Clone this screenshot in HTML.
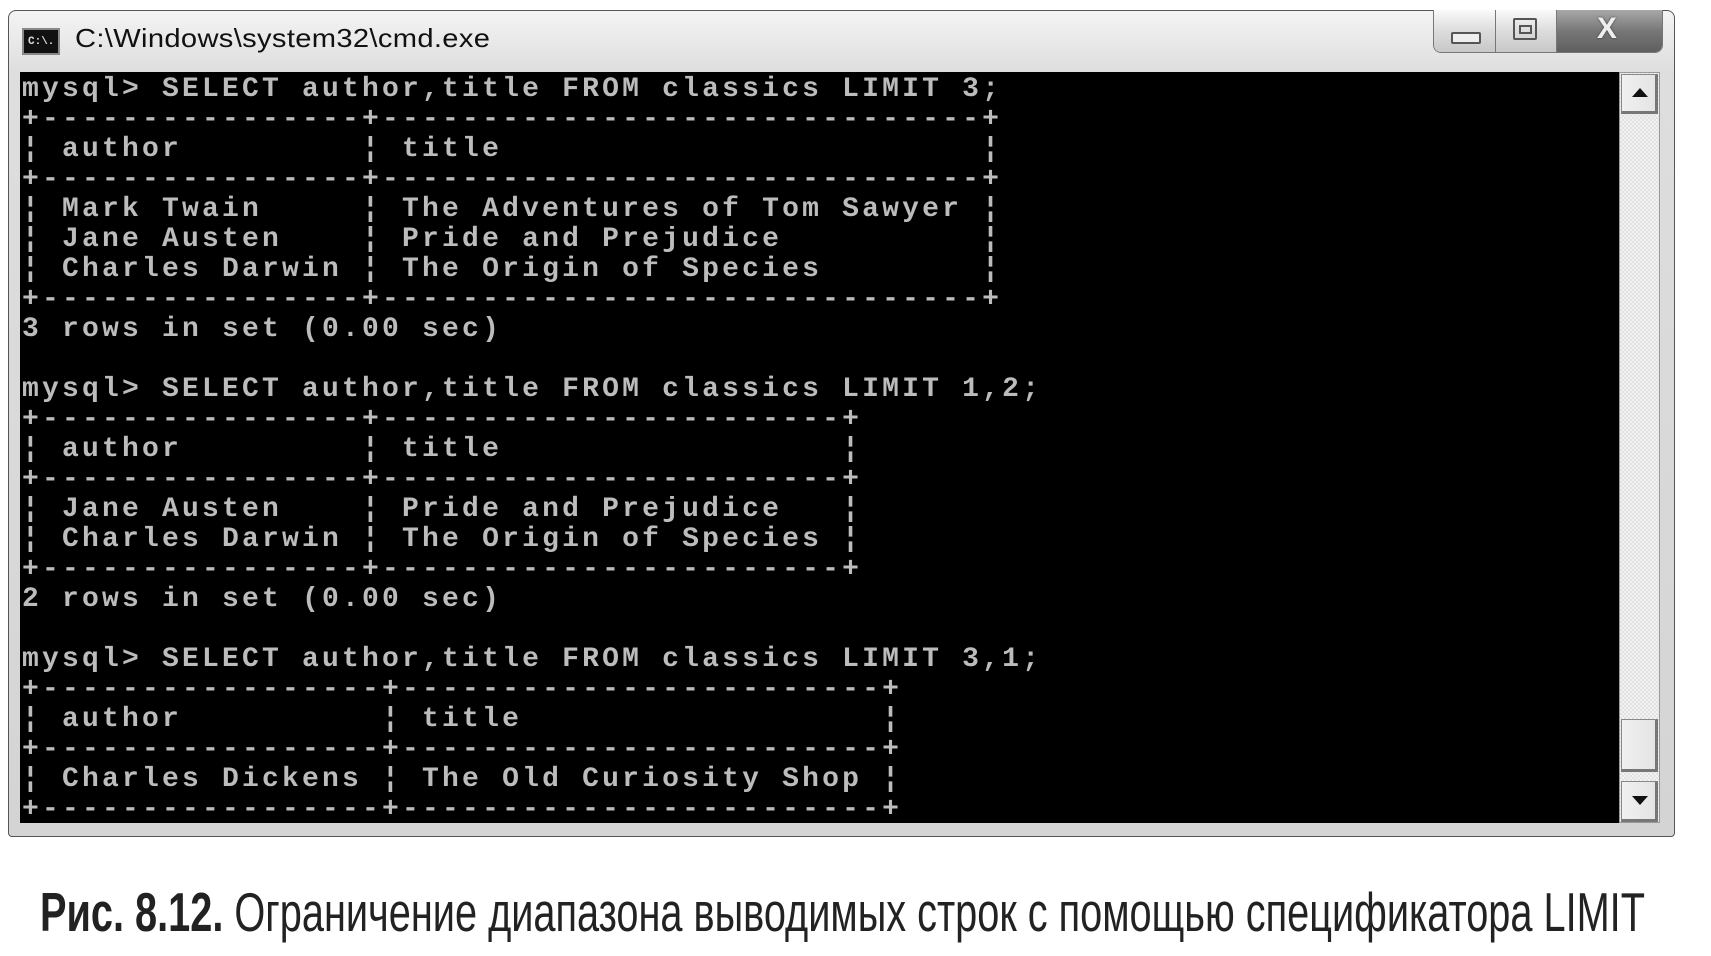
<!DOCTYPE html>
<html><head><meta charset="utf-8"><style>
html,body{margin:0;padding:0;background:#fff;width:1711px;height:956px;overflow:hidden;position:relative}
.win{position:absolute;left:8px;top:10px;width:1667px;height:827px;border:1px solid #555;border-radius:8px 8px 4px 4px;background:linear-gradient(#f4f4f4,#dedede 60px,#d4d4d4);box-sizing:border-box}
.icon{position:absolute;left:22px;top:28px;width:38px;height:27px;background:#111;border:2px solid #888;box-sizing:border-box}
.icon span{position:absolute;left:4px;top:6px;font:bold 11px "Liberation Mono",monospace;color:#ddd}
.title{position:absolute;left:75px;top:23px;font:26px "Liberation Sans",sans-serif;color:#111;letter-spacing:0.3px;transform:scaleX(1.12);transform-origin:left}
.btns{position:absolute;left:1433px;top:10px;width:230px;height:43px;border:1px solid #777;border-top:none;border-radius:0 0 8px 8px;overflow:hidden;display:flex;box-sizing:border-box}
.b{height:100%;background:linear-gradient(#fafafa,#dcdcdc 50%,#c8c8c8);border-right:1px solid #777;position:relative;box-sizing:border-box}
.term{position:absolute;left:20px;top:72px;width:1599px;height:751px;background:#000}
.pre{position:absolute;left:22px;top:75px;margin:0;font:bold 28px/30px "Liberation Mono",monospace;letter-spacing:3.2px;color:#bcbcbc;white-space:pre}
.sb{position:absolute;left:1619px;top:72px;width:41px;height:751px;background:repeating-conic-gradient(#f2f2f2 0 25%,#e2e2e2 0 50%) 0 0/4px 4px;border:1px solid #999;box-sizing:border-box}
.sbb{position:absolute;left:1px;width:37px;background:linear-gradient(90deg,#f0f0f0,#e4e4e4);border:1px solid #888;border-right:3px solid #777;border-bottom:3px solid #777;box-sizing:border-box}
.cap{position:absolute;left:40px;top:882px;font:55px/60px "Liberation Sans",sans-serif;color:#222;white-space:nowrap;transform:scaleX(0.722);transform-origin:left}
</style></head><body>
<div class="win">
</div>
<div class="icon"><span>C:\.</span></div>
<div class="title">C:\Windows\system32\cmd.exe</div>
<div class="btns">
 <div class="b" style="width:63px"><div style="position:absolute;left:17px;top:22px;width:26px;height:8px;border:2px solid #555;border-radius:2px;background:#eee"></div></div>
 <div class="b" style="width:61px"><div style="position:absolute;left:17px;top:8px;width:20px;height:18px;border:2px solid #555;border-radius:2px"><div style="position:absolute;left:4px;top:5px;width:9px;height:5px;border:2px solid #555"></div></div></div>
 <div class="b" style="width:106px;border-right:none;background:linear-gradient(#a8a8a8,#777 50%,#5f5f5f)"><div style="position:absolute;left:40px;top:2px;font:bold 30px 'Liberation Sans',sans-serif;color:#eee;text-shadow:0 0 2px #333">X</div></div>
</div>
<div class="term"></div>
<pre class="pre">mysql&gt; SELECT author,title FROM classics LIMIT 3;
+----------------+------------------------------+
¦ author         ¦ title                        ¦
+----------------+------------------------------+
¦ Mark Twain     ¦ The Adventures of Tom Sawyer ¦
¦ Jane Austen    ¦ Pride and Prejudice          ¦
¦ Charles Darwin ¦ The Origin of Species        ¦
+----------------+------------------------------+
3 rows in set (0.00 sec)

mysql&gt; SELECT author,title FROM classics LIMIT 1,2;
+----------------+-----------------------+
¦ author         ¦ title                 ¦
+----------------+-----------------------+
¦ Jane Austen    ¦ Pride and Prejudice   ¦
¦ Charles Darwin ¦ The Origin of Species ¦
+----------------+-----------------------+
2 rows in set (0.00 sec)

mysql&gt; SELECT author,title FROM classics LIMIT 3,1;
+-----------------+------------------------+
¦ author          ¦ title                  ¦
+-----------------+------------------------+
¦ Charles Dickens ¦ The Old Curiosity Shop ¦
+-----------------+------------------------+</pre>
<div class="sb">
 <div class="sbb" style="top:1px;height:40px"><div style="position:absolute;left:10px;top:13px;width:0;height:0;border-left:8px solid transparent;border-right:8px solid transparent;border-bottom:9px solid #111"></div></div>
 <div class="sbb" style="top:646px;height:53px"></div>
 <div class="sbb" style="top:708px;height:41px"><div style="position:absolute;left:10px;top:14px;width:0;height:0;border-left:8px solid transparent;border-right:8px solid transparent;border-top:9px solid #111"></div></div>
</div>
<div class="cap"><b>Рис. 8.12.</b> Ограничение диапазона выводимых строк с помощью спецификатора LIMIT</div>
</body></html>
